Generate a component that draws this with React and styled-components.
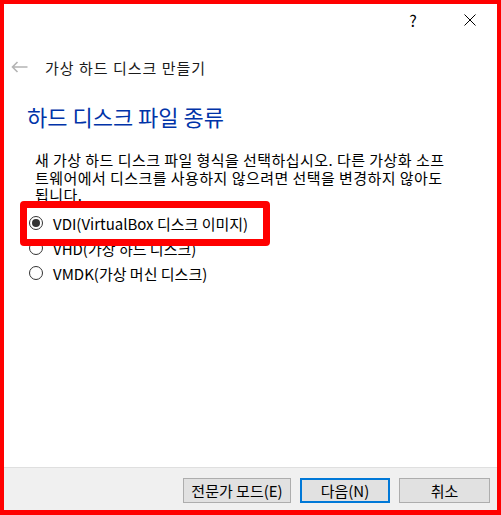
import styled, { createGlobalStyle } from "styled-components";

const GlobalStyle = createGlobalStyle`
	html, body {
		margin: 0;
		padding: 0;
		background: #ffffff;
	}
	body {
		font-family: "Noto Sans CJK KR", "Noto Sans", sans-serif;
		color: #000000;
	}
`;

const Frame = styled.div`
	position: relative;
	width: 501px;
	height: 515px;
	box-sizing: border-box;
	border: 4px solid #ff0000;
	border-bottom-width: 5px;
	background: #ffffff;
	display: flex;
	flex-direction: column;
`;

const CaptionBar = styled.div`
	height: 32px;
	display: flex;
	align-items: center;
	justify-content: flex-end;
	gap: 33px;
	padding-right: 15px;
`;

const CaptionButton = styled.div`
	width: 24px;
	height: 24px;
	display: flex;
	align-items: center;
	justify-content: center;
	font-size: 16px;
	line-height: 1;
`;

const NavRow = styled.div`
	margin-top: 19px;
	height: 24px;
	display: flex;
	align-items: center;
	padding-left: 7px;
	gap: 17px;
`;

const NavTitle = styled.span`
	font-size: 15px;
	color: #1a1a1a;
	letter-spacing: 1px;
`;

const Content = styled.div`
	padding-left: 23px;
	display: flex;
	flex-direction: column;
`;

const Heading = styled.h1`
	margin: 22px 0 0 0;
	font-size: 22px;
	font-weight: 400;
	line-height: 30px;
	color: #0033a8;
	letter-spacing: 0;
`;

const Description = styled.p`
	margin: 20px 0 0 8px;
	font-size: 15px;
	line-height: 17.5px;
	letter-spacing: 0.45px;
`;

const Line = styled.span`
	display: block;
	white-space: nowrap;
`;

const Options = styled.div`
	margin-top: 7px;
	display: flex;
	flex-direction: column;
`;

const Option = styled.div`
	height: 25px;
	display: flex;
	align-items: center;
	gap: 10px;
	padding-left: 2px;
	font-size: 15px;
`;

const Radio = styled.span`
	flex: none;
	width: 14px;
	height: 14px;
	box-sizing: border-box;
	border: 1px solid #333333;
	border-radius: 50%;
	display: flex;
	align-items: center;
	justify-content: center;
	background: #ffffff;

	&::after {
		content: "";
		width: 8px;
		height: 8px;
		border-radius: 50%;
		background: ${(p) => (p.$checked ? "#333333" : "transparent")};
	}
`;

const Spacer = styled.div`
	flex: 1;
`;

const Footer = styled.div`
	height: 32px;
	border-top: 1px solid #dfdfdf;
	background: #f0f0f0;
	display: flex;
	justify-content: flex-end;
	align-items: flex-start;
	gap: 9px;
	padding: 10px 7px 0 0;
`;

const Button = styled.button`
	width: ${(p) => p.$width}px;
	height: 25px;
	box-sizing: border-box;
	margin: 0;
	padding: 0;
	font-family: inherit;
	font-size: 15px;
	line-height: 1;
	color: #000000;
	background: #e1e1e1;
	border: ${(p) => (p.$default ? "2px solid #0078d7" : "1px solid #adadad")};
`;

const Highlight = styled.div`
	position: absolute;
	left: 16px;
	top: 197px;
	width: 250px;
	height: 45px;
	box-sizing: border-box;
	border: 7px solid #ff0000;
	border-radius: 4px;
	pointer-events: none;
`;

const BackArrow = () => (
	<svg width="17" height="12" viewBox="0 0 17 12">
		<path
			d="M1.5 6 H16.5 M6.5 1 L1.5 6 L6.5 11"
			fill="none"
			stroke="#b4b4b4"
			strokeWidth="1.6"
		/>
	</svg>
);

const CloseIcon = () => (
	<svg width="12" height="12" viewBox="0 0 12 12">
		<path d="M0.5 0.5 L11.5 11.5 M11.5 0.5 L0.5 11.5" stroke="#000" strokeWidth="1" />
	</svg>
);

const formats = [
	{ label: "VDI(VirtualBox 디스크 이미지)", checked: true },
	{ label: "VHD(가상 하드 디스크)", checked: false },
	{ label: "VMDK(가상 머신 디스크)", checked: false },
];

const App = () => {
	return (
		<>
			<GlobalStyle />
			<Frame>
				<CaptionBar>
					<CaptionButton>?</CaptionButton>
					<CaptionButton>
						<CloseIcon />
					</CaptionButton>
				</CaptionBar>
				<NavRow>
					<BackArrow />
					<NavTitle>가상 하드 디스크 만들기</NavTitle>
				</NavRow>
				<Content>
					<Heading>하드 디스크 파일 종류</Heading>
					<Description>
						<Line>새 가상 하드 디스크 파일 형식을 선택하십시오. 다른 가상화 소프</Line>
						<Line>트웨어에서 디스크를 사용하지 않으려면 선택을 변경하지 않아도</Line>
						<Line>됩니다.</Line>
					</Description>
					<Options>
						{formats.map((f) => (
							<Option key={f.label}>
								<Radio $checked={f.checked} />
								<span>{f.label}</span>
							</Option>
						))}
					</Options>
				</Content>
				<Spacer />
				<Footer>
					<Button $width={108}>전문가 모드(E)</Button>
					<Button $width={90} $default>
						다음(N)
					</Button>
					<Button $width={91}>취소</Button>
				</Footer>
				<Highlight />
			</Frame>
		</>
	);
};

export default App;
